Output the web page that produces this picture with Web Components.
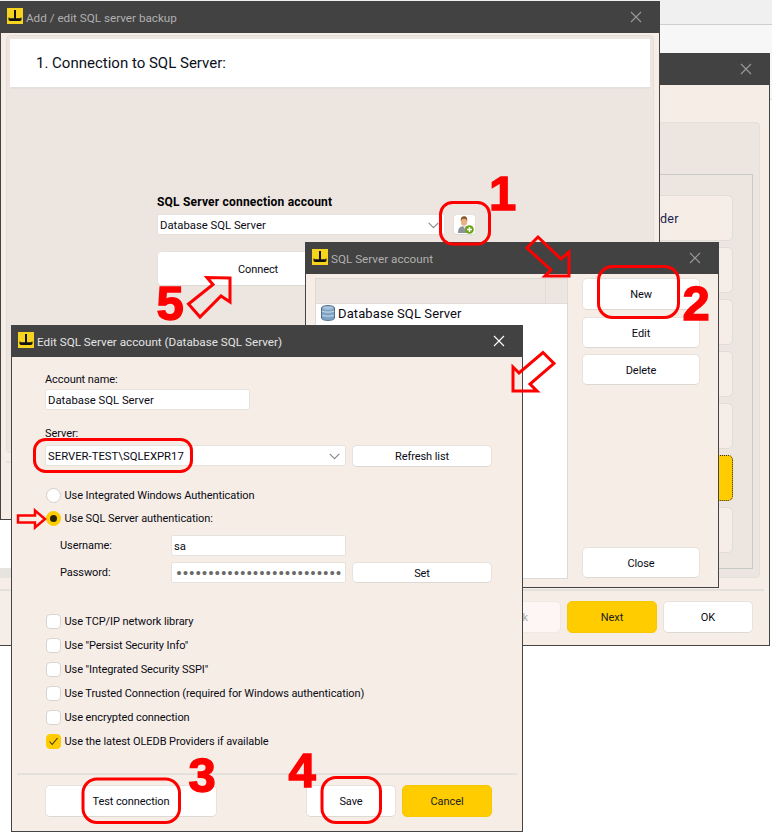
<!DOCTYPE html>
<html lang="en"><head><meta charset="utf-8"><title>SQL Server backup</title>
<style>
html,body{margin:0;padding:0;width:772px;height:832px;overflow:hidden;background:#fff}
</style></head>
<body>
<backup-desktop></backup-desktop>
<script>
const FONT='font-family:Roboto,"Liberation Sans",sans-serif;letter-spacing:-.08px;';
function def(name,html,extra){
  customElements.define(name,class extends HTMLElement{
    constructor(){super();this.attachShadow({mode:'open'}).innerHTML=html;}
    connectedCallback(){if(extra)extra(this);}
  });
}
const logo='<svg width="16" height="16" viewBox="0 0 16 16"><rect width="16" height="16" fill="#f6d31f"/><path d="M7 2h2v8.2h4.6V9.6h.9v1.6c0 1-.7 1.7-1.7 1.7H3.2c-1 0-1.7-.7-1.7-1.7V9.6h.9v.6H7z" fill="#111"/></svg>';

def('app-window',`<style>
:host{position:absolute;display:flex;flex-direction:column;box-sizing:border-box}
.bar{height:32px;flex:none;background:#424242;display:flex;align-items:center;padding-left:7px;gap:3px;color:var(--tc,#b0b0b0);font-size:11.7px;letter-spacing:0;position:relative;white-space:nowrap;overflow:hidden}
.logo{display:flex;margin-top:-2px}
#t{margin-top:1px}
.x{margin-left:auto;margin-right:18px;display:flex}
.body{flex:1;min-height:0;background:#f6eee6;border:1px solid #444;border-top:0;display:flex;flex-direction:column;overflow:hidden;box-sizing:border-box}
</style><div class="bar"><span class="logo" part="logo">${logo}</span><span id="t"></span><span class="x"><svg width="12" height="12" viewBox="0 0 12 12"><path d="M1 1l10 10M11 1L1 11" stroke="var(--xc,#9a9a9a)" stroke-width="1.1" fill="none"/></svg></span></div><div class="body"><slot></slot></div>`,
el=>{
  el.style.left=el.getAttribute('x')+'px';el.style.top=el.getAttribute('y')+'px';
  el.style.width=el.getAttribute('w')+'px';el.style.height=el.getAttribute('h')+'px';
  el.shadowRoot.getElementById('t').textContent=el.getAttribute('heading')||'';
  if(el.hasAttribute('active')){el.style.setProperty('--tc','#e4e4e4');el.style.setProperty('--xc','#fff');}
});

def('ui-button',`<style>
:host{display:flex;align-items:center;justify-content:center;box-sizing:border-box;background:#fff;border:1px solid #e6e2de;border-bottom-color:#dcd8d4;border-radius:5px;font-size:11px;color:#0a0a14;white-space:nowrap;padding-top:1px}
:host([primary]){background:#ffcc00;border-color:#f7c800;color:#222}
:host([disabled]){background:#fdf6f4;border-color:#efe8e4;color:#aaa}
:host([card]){background:#f6eee6;border-color:#e0ddd8}
:host([focus]){background:#ffcc00;border:1px dotted #222}
</style><slot></slot>`);

def('ui-input',`<style>
:host{display:flex;align-items:center;box-sizing:border-box;background:#fff;border:1px solid #e6e2de;border-radius:2px;font-size:11.3px;letter-spacing:0;color:#0a0a14;padding:1px 0 0 2px;height:21px;white-space:nowrap;overflow:hidden}
:host([secret]){color:#6a6a6a;font-family:"DejaVu Sans",sans-serif;font-size:13.5px;letter-spacing:-1.58px;padding:0 0 0 3px}
</style><slot></slot>`);

def('ui-combo',`<style>
:host{display:flex;align-items:center;box-sizing:border-box;background:#fff;border:1px solid #e6e2de;border-radius:2px;font-size:11.3px;letter-spacing:0;color:#0a0a14;padding:1px 5px 0 2px;white-space:nowrap}
svg{margin-left:auto;flex:none}
</style><slot></slot><svg width="11" height="7" viewBox="0 0 11 7"><path d="M.7.8l4.8 4.8L10.3.8" fill="none" stroke="#8a8a8a" stroke-width="1.2"/></svg>`);

def('ui-radio',`<style>
:host{display:flex;align-items:center;height:23px;font-size:11px;color:#0a0a14;white-space:nowrap}
i{width:15px;height:15px;box-sizing:border-box;margin:0 3.5px 0 1px;border-radius:50%;background:#fff;border:1px solid #d4d0cc;flex:none;display:flex;align-items:center;justify-content:center}
:host([on]) i{background:#ffcc00;border-color:#ffcc00}
:host([on]) i::after{content:"";width:7px;height:7px;border-radius:50%;background:#2a2208}
</style><i></i><slot></slot>`);

def('ui-check',`<style>
:host{display:flex;align-items:center;height:24px;font-size:11px;color:#0a0a14;white-space:nowrap}
i{width:15px;height:15px;box-sizing:border-box;margin:0 3.5px 0 1px;border-radius:4px;background:#fff;border:1px solid #d8d4d0;flex:none;display:flex;align-items:center;justify-content:center}
:host([on]) i{background:#ffcc00;border-color:#ffcc00}
svg{display:none}
:host([on]) svg{display:block}
</style><i><svg width="11" height="9" viewBox="0 0 11 9"><path d="M1.5 4.5l2.7 3L9.5 1" fill="none" stroke="#3a3010" stroke-width="1.1"/></svg></i><slot></slot>`);

def('back-wizard',`<style>
:host{display:contents;${FONT}}
.panel{margin:37px 9px 0 0;height:456px;box-sizing:border-box;background:#ece5e0;border:1px solid #e3e0dc;border-radius:4px;padding:51px 6px 8px 0;flex:none}
.group{height:100%;box-sizing:border-box;border:1px solid #c9c9c6;border-left:0;padding:20px 19px 0 0;display:flex;flex-direction:column;align-items:flex-end;gap:6px}
.group ui-button{width:220px;height:46px;justify-content:flex-end;color:#1a2250;font-size:12.5px;letter-spacing:.375px;padding-right:53px}
hr{margin:11px 5px 0 0;border:0;height:2px;background:#e4e0dc;flex:none}
.foot{display:flex;justify-content:flex-end;gap:6px;margin:10px 16px 0 0}
.foot ui-button{height:32px;width:90px}
</style>
<app-window x="-1" y="53" w="771" h="593"><div class="panel"><div class="group">
<ui-button card>lder</ui-button><ui-button card></ui-button><ui-button card></ui-button><ui-button card></ui-button><ui-button card></ui-button><ui-button focus></ui-button><ui-button card></ui-button>
</div></div><hr>
<div class="foot"><ui-button disabled>Back</ui-button><ui-button primary>Next</ui-button><ui-button>OK</ui-button></div></app-window>`);

def('connect-window',`<style>
:host{display:contents;${FONT}}
.panel{margin:2px 5px 0 5px;height:418px;box-sizing:border-box;background:#ece5e0;border:1px solid #e3e0dc;border-radius:4px;padding:3px;flex:none}
.head{height:50px;box-sizing:border-box;background:#fff;border-bottom:2px solid #e4e0dc;padding-left:26px;display:flex;align-items:center;font-size:15px;letter-spacing:0;color:#0a1020}
.form{margin:105px 0 0 147px;width:320px}
b{display:block;font-size:12px;line-height:16px;color:#000;margin-bottom:4px;letter-spacing:.2px}
.row{display:flex;gap:8px;height:21px}
ui-combo{width:288px}
.ic{width:23px;padding:0;border-radius:4px}
.conn{width:202px;height:35px;margin-top:16px}
hr{margin:8px 5px 0;border:0;height:2px;background:#e4e0dc;flex:none}
</style>
<app-window x="0" y="1" w="660" h="519" heading="Add / edit SQL server backup"><div class="panel">
<div class="head">1. Connection to SQL Server:</div>
<div class="form"><b>SQL Server connection account</b>
<div class="row"><ui-combo>Database SQL Server</ui-combo><ui-button class="ic"><svg width="20" height="20" viewBox="0 0 20 20"><path d="M3 18c0-5 2-7 6.500-7s5 2 5 7z" fill="#8d9398"/><path d="M8 11l1.500 3 1.500-3z" fill="#e8e8e8"/><ellipse cx="9" cy="6.500" rx="3.200" ry="4.300" fill="#e8b183"/><path d="M5.800 6c-.3-3.500 1.500-4.800 3.400-4.800S12.500 2.500 12.200 6c-.7-1.800-1.800-2.300-3.200-2.300S6.500 4.200 5.800 6z" fill="#8a5526"/><circle cx="14.500" cy="14.500" r="4.300" fill="#6aa510"/><path d="M14.500 12v5M12 14.500h5" stroke="#fff" stroke-width="1.500"/></svg></ui-button></div>
<ui-button class="conn">Connect</ui-button></div>
</div><hr></app-window>`);

def('account-list',`<style>
:host{display:contents;${FONT}}
.wrap{flex:1;display:flex;padding:4px 18px 8px 9px;gap:14px;min-height:0}
.list{width:253px;box-sizing:border-box;background:#fff;border:1px solid #dedad6;flex:none;display:flex;flex-direction:column}
.lh{height:24px;flex:none;background:#ece5e0;border-bottom:1px solid #e0dcd8;display:flex;justify-content:flex-end}
.lh i{width:21px;border-left:1px solid #e0dcd8}
.it{display:flex;align-items:center;gap:3px;height:18px;padding:0 0 0 5px;font-size:13px;letter-spacing:.1px;color:#0a0a14;white-space:nowrap}
.side{width:118px;display:flex;flex-direction:column;gap:7px;flex:none}
.side ui-button{height:31px}
.side .new{height:32px}
.side .del{margin-top:-1px}
.side .close{margin-top:auto;margin-bottom:1px}
</style>
<app-window x="305" y="242" w="414" h="346" heading="SQL Server account"><div class="wrap">
<div class="list"><div class="lh"><i></i></div><div class="it"><svg width="14" height="16" viewBox="0 0 14 16"><path d="M.5 3c0-1.500 3-2.500 6.500-2.500s6.500 1 6.500 2.500v10c0 1.500-3 2.500-6.500 2.500S.5 14.500.5 13z" fill="#7ea2c4" stroke="#55708c"/><path d="M1 6c1 1.500 11 1.500 12 0M1 10c1 1.500 11 1.500 12 0" fill="none" stroke="#cfe0ee" stroke-width="1"/><ellipse cx="7" cy="3" rx="5" ry="1.700" fill="#a9c4dc"/></svg>Database SQL Server</div></div>
<div class="side"><ui-button class="new">New</ui-button><ui-button>Edit</ui-button><ui-button class="del">Delete</ui-button><ui-button class="close">Close</ui-button></div>
</div></app-window>`);

def('account-form',`<style>
:host{display:contents;${FONT}}
.f{padding:14px 30px 0 33px;font-size:11px;color:#0a0a14;display:flex;flex-direction:column;white-space:nowrap}
.l{line-height:18px;height:16px}
.mb{margin-bottom:2px}
.name{width:205px}
.row{display:flex;gap:6px}
.row ui-combo{width:301px;height:21px}
.row ui-button{width:140px;height:22px}
.sub{display:grid;grid-template-columns:111px 175px 146px;column-gap:0;align-items:center;padding-left:15px;row-gap:6px;margin-top:5px}
.sub ui-button{margin-left:6px;height:21px}
.rad{margin-top:17px}
.chk{margin-top:26px}
hr{margin:20px 0 0 -28px;width:500px;border:0;height:2px;background:#e4e0dc;flex:none}
.foot{display:flex;margin-top:10px}
.foot ui-button{height:32px}
</style>
<app-window x="11" y="325" w="512" h="507" active heading="Edit SQL Server account (Database SQL Server)"><div class="f">
<div class="l mb">Account name:</div><ui-input class="name">Database SQL Server</ui-input>
<div class="l" style="margin:15px 0 4px">Server:</div>
<div class="row"><ui-combo>SERVER-TEST\\SQLEXPR17</ui-combo><ui-button>Refresh list</ui-button></div>
<div class="rad"><ui-radio>Use Integrated Windows Authentication</ui-radio><ui-radio on>Use SQL Server authentication:</ui-radio></div>
<div class="sub"><span>Username:</span><ui-input>sa</ui-input><span></span><span>Password:</span><ui-input secret>••••••••••••••••••••••••••</ui-input><ui-button>Set</ui-button></div>
<div class="chk"><ui-check>Use TCP/IP network library</ui-check><ui-check>Use "Persist Security Info"</ui-check><ui-check>Use "Integrated Security SSPI"</ui-check><ui-check>Use Trusted Connection (required for Windows authentication)</ui-check><ui-check>Use encrypted connection</ui-check><ui-check on>Use the latest OLEDB Providers if available</ui-check></div>
<hr>
<div class="foot"><ui-button style="width:172px">Test connection</ui-button><ui-button style="width:90px;margin-left:89px">Save</ui-button><ui-button primary style="width:90px;margin-left:6px">Cancel</ui-button></div>
</div></app-window>`);

def('call-outs',`<style>
:host{position:absolute;left:0;top:0;width:772px;height:832px;pointer-events:none;display:block}
svg{position:absolute;left:0;top:0}
.n{fill:#f00;font:700 49px "Liberation Sans",Arial,sans-serif;stroke:#f00;stroke-width:1.4}
</style>
<svg width="772" height="832" viewBox="0 0 772 832" fill="none" stroke="#f00" stroke-width="3" stroke-linejoin="miter">
<rect x="440.500" y="202.500" width="49" height="41.500" rx="12"/>
<rect x="598.500" y="266.500" width="80" height="51" rx="14"/>
<rect x="34.500" y="439.500" width="157" height="32" rx="11"/>
<rect x="83" y="779" width="96.500" height="43.500" rx="14"/>
<rect x="322" y="777.500" width="58.500" height="45" rx="14"/>
<path d="M230 278L207 277.500L213 284.500L188.500 304L200 317L221 296L230 302Z"/>
<path d="M569 276L545 276L551 270L527 248L538 237L561 259L569 252Z"/>
<path d="M513 391L513 367L519 373L543 352.500L554 363.500L530 384L537 391Z"/>
<path d="M18 515.500H35V510.500L45 519L35 527.500V522.500H18Z" stroke-width="2.500"/>
<text class="n" x="489" y="210">1</text>
<text class="n" x="682.500" y="320">2</text>
<text class="n" x="188.500" y="792">3</text>
<text class="n" x="288.500" y="787">4</text>
<text class="n" x="156.500" y="320">5</text>
</svg>`);

def('backup-desktop',`<style>
:host{position:relative;display:block;width:772px;height:832px;overflow:hidden;background:#fff;font-family:Roboto,"Liberation Sans",sans-serif}
.top{height:24px;background:#f0f0f0;border-bottom:1px solid #cfcfcf}
.sub{height:74px;background:#f6f7f6;border-bottom:1px solid #dedede}
.patch{position:absolute;left:0;top:520px;width:12px;height:58px;background:linear-gradient(#fff 0 48px,#e7e3df 48px)}
</style>
<div class="top"></div><div class="sub"></div>
<back-wizard></back-wizard><div class="patch"></div><connect-window></connect-window><account-list></account-list><account-form></account-form><call-outs></call-outs>`);
</script>
</body></html>
